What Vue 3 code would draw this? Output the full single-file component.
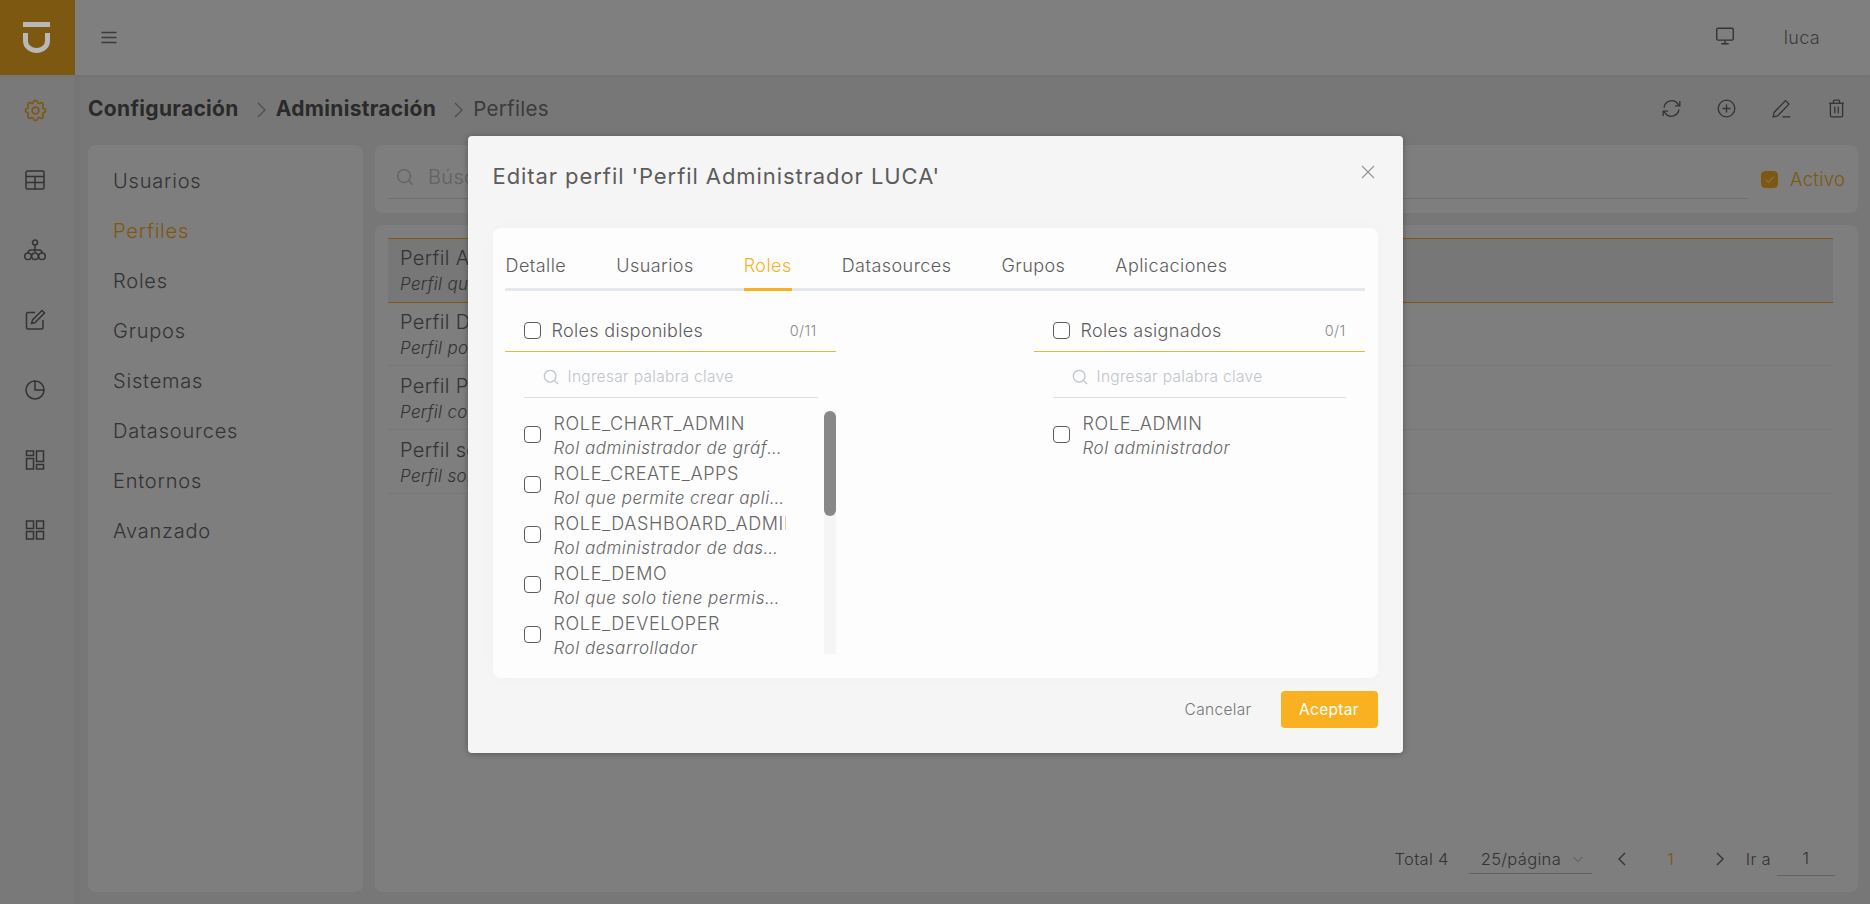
<template>
	<div class="page">
		<header class="topbar">
			<div class="logo">
				<svg width="75" height="75" viewBox="0 0 75 75" fill="none" stroke="#b8b8b8" stroke-width="5">
					<path d="M23 24.500h27M25.500 33v8a11 9.500 0 0 0 22 0v-8" />
				</svg>
			</div>
			<svg class="burger" width="18" height="18" viewBox="0 0 18 18" fill="none" stroke="#777" stroke-width="1.300">
				<path d="M1.500 3.500h15M1.500 8.500h15M1.500 13.500h15" />
			</svg>
			<svg class="monitor icon" viewBox="0 0 24 24"><path v-for="d in icons.monitor" :key="d" :d="d" /></svg>
			<span class="user">luca</span>
		</header>

		<div class="body">
			<aside class="rail">
				<svg v-for="(name, i) in railIcons" :key="name" class="icon" :class="{ active: i === 0 }" viewBox="0 0 24 24">
					<path v-for="d in icons[name]" :key="d" :d="d" />
				</svg>
			</aside>

			<main class="main">
				<div class="crumbs">
					<strong>Configuración</strong>
					<svg class="sep" viewBox="0 0 12 18"><path d="M2 2l7 7-7 7" /></svg>
					<strong>Administración</strong>
					<svg class="sep" viewBox="0 0 12 18"><path d="M2 2l7 7-7 7" /></svg>
					<span>Perfiles</span>
					<div class="tools">
						<svg v-for="name in toolIcons" :key="name" class="icon" viewBox="0 0 24 24">
							<path v-for="d in icons[name]" :key="d" :d="d" />
						</svg>
					</div>
				</div>

				<div class="content">
					<nav class="card menu">
						<a v-for="item in menu" :key="item" :class="{ current: item === 'Perfiles' }">{{ item }}</a>
					</nav>

					<div class="right">
						<div class="card filter">
							<div class="filter-input">
								<svg class="icon search" viewBox="0 0 24 24"><path v-for="d in icons.search" :key="d" :d="d" /></svg>
								<span>Búsqueda</span>
							</div>
							<span class="check on">
								<svg width="13" height="13" viewBox="0 0 13 13" fill="none" stroke="#fff" stroke-width="1"><path d="M2.500 6.500l3 3 5-6" /></svg>
							</span>
							<span class="active-label">Activo</span>
						</div>

						<div class="card results">
							<div v-for="(p, i) in profiles" :key="p.name" class="row" :class="{ selected: i === 0 }">
								<div class="row-name">{{ p.name }}</div>
								<div class="row-desc">{{ p.desc }}</div>
							</div>
							<div class="pager">
								<span>Total 4</span>
								<span class="size">25/página
									<svg width="12" height="12" viewBox="0 0 12 12" fill="none" stroke="#aaa"><path d="M1.500 4l4.500 4.500L10.500 4" /></svg>
								</span>
								<svg class="pg" viewBox="0 0 12 18"><path d="M9 3L3 9l6 6" /></svg>
								<span class="num">1</span>
								<svg class="pg" viewBox="0 0 12 18"><path d="M3 3l6 6-6 6" /></svg>
								<span class="goto">Ir a</span>
								<span class="jump">1</span>
							</div>
						</div>
					</div>
				</div>
			</main>
		</div>

		<div class="overlay">
			<section class="dialog">
				<div class="dialog-head">
					<h2>Editar perfil 'Perfil Administrador LUCA'</h2>
					<svg class="close" width="14" height="14" viewBox="0 0 14 14" fill="none" stroke="#909399" stroke-width="1.100"><path d="M1 1l12 12M13 1L1 13" /></svg>
				</div>

				<div class="dialog-card">
					<div class="tabs">
						<span v-for="t in tabs" :key="t" class="tab" :class="{ on: t === 'Roles' }">{{ t }}</span>
					</div>

					<div class="transfer">
						<div v-for="panel in panels" :key="panel.title" class="panel">
							<div class="panel-head">
								<input type="checkbox" class="check" />
								<span class="panel-title">{{ panel.title }}</span>
								<span class="count">{{ panel.count }}</span>
							</div>
							<div class="panel-search">
								<svg class="icon" viewBox="0 0 24 24"><path v-for="d in icons.search" :key="d" :d="d" /></svg>
								<span>Ingresar palabra clave</span>
							</div>
							<div class="panel-body">
								<ul :class="{ narrow: panel.scroll }">
									<li v-for="r in panel.roles" :key="r.name">
										<input type="checkbox" class="check" />
										<div class="role">
											<div class="role-name">{{ r.name }}</div>
											<div class="role-desc">{{ r.desc }}</div>
										</div>
									</li>
								</ul>
								<div v-if="panel.scroll" class="track"><div class="thumb"></div></div>
							</div>
						</div>
					</div>
				</div>

				<div class="dialog-foot">
					<button class="cancel">Cancelar</button>
					<button class="accept">Aceptar</button>
				</div>
			</section>
		</div>
	</div>
</template>

<script setup>
	const search = ["M11 4a7 7 0 1 0 0 14a7 7 0 1 0 0-14z", "M16 16l4.500 4.500"];

	const icons = {
		search,
		monitor: ["M4.500 3.500h15a1.500 1.500 0 0 1 1.500 1.500v10a1.500 1.500 0 0 1-1.500 1.500h-15a1.500 1.500 0 0 1-1.500-1.500v-10a1.500 1.500 0 0 1 1.500-1.500z", "M12 16.500v3.500M8 20.500h8"],
		gear: ["M10.325 4.317c.426-1.756 2.924-1.756 3.35 0a1.724 1.724 0 0 0 2.573 1.066c1.543-.94 3.31.826 2.37 2.37a1.724 1.724 0 0 0 1.065 2.572c1.756.426 1.756 2.924 0 3.35a1.724 1.724 0 0 0-1.066 2.573c.94 1.543-.826 3.31-2.37 2.37a1.724 1.724 0 0 0-2.572 1.065c-.426 1.756-2.924 1.756-3.35 0a1.724 1.724 0 0 0-2.573-1.066c-1.543.94-3.31-.826-2.37-2.37a1.724 1.724 0 0 0-1.065-2.572c-1.756-.426-1.756-2.924 0-3.35a1.724 1.724 0 0 0 1.066-2.573c-.94-1.543.826-3.31 2.37-2.37 1 .608 2.296.07 2.572-1.065z", "M12 9a3 3 0 1 0 0 6a3 3 0 1 0 0-6z"],
		table: ["M4.500 3h15a1.500 1.500 0 0 1 1.500 1.500v15a1.500 1.500 0 0 1-1.500 1.500h-15a1.500 1.500 0 0 1-1.500-1.500v-15a1.500 1.500 0 0 1 1.500-1.500z", "M3 8.500h18M3 14.500h18M12 8.500v12.500"],
		org: ["M12 2a2.500 2.500 0 1 0 0 5a2.500 2.500 0 1 0 0-5z", "M12 7v7", "M5 15a3.300 3.300 0 1 0 0 6.600a3.300 3.300 0 1 0 0-6.600z", "M12 15a3.300 3.300 0 1 0 0 6.600a3.300 3.300 0 1 0 0-6.600z", "M19 15a3.300 3.300 0 1 0 0 6.600a3.300 3.300 0 1 0 0-6.600z", "M5 15c0-2 1-3 3-3h8c2 0 3 1 3 3"],
		edit: ["M12 4.500h-7a1.500 1.500 0 0 0-1.500 1.500v13.500a1.500 1.500 0 0 0 1.500 1.500h13.500a1.500 1.500 0 0 0 1.500-1.500v-7.500", "M19 2.500l2.500 2.500-9.500 9.500-3.500 1 1-3.500z"],
		pie: ["M12 3a9 9 0 1 0 9 9", "M12 3a9 9 0 0 1 9 9h-9z"],
		panels: ["M3.500 3h7v4.500h-7z", "M3.500 10.500h7v10.500h-7z", "M13.500 3h7v10.500h-7z", "M13.500 16.500h7v4.500h-7z"],
		grid: ["M3.500 3h7v7.500h-7z", "M13.500 3h7v7.500h-7z", "M3.500 13.500h7v7.500h-7z", "M13.500 13.500h7v7.500h-7z"],
		refresh: ["M3.500 11a8.700 8.700 0 0 1 15.500-4.500l2 2.500", "M21.500 3.500v5.500h-5.500", "M20.500 13a8.700 8.700 0 0 1-15.500 4.500l-2-2.500", "M2.500 20.500v-5.500h5.500"],
		plus: ["M12 2.500a9.500 9.500 0 1 0 0 19a9.500 9.500 0 1 0 0-19z", "M12 7.500v9M7.500 12h9"],
		pen: ["M16.500 3l4 4-13 13.500-5 1 1-5z", "M13 21.500h9"],
		trash: ["M3.500 6h17", "M8.500 6v-2.500a1 1 0 0 1 1-1h5a1 1 0 0 1 1 1v2.500", "M5 6v14a1.500 1.500 0 0 0 1.500 1.500h11a1.500 1.500 0 0 0 1.500-1.500v-14", "M10 10v7.500M14 10v7.500"]
	};

	const railIcons = ["gear", "table", "org", "edit", "pie", "panels", "grid"];
	const toolIcons = ["refresh", "plus", "pen", "trash"];

	const menu = ["Usuarios", "Perfiles", "Roles", "Grupos", "Sistemas", "Datasources", "Entornos", "Avanzado"];

	const profiles = [
		{ name: "Perfil Administrador LUCA", desc: "Perfil que administra LUCA" },
		{ name: "Perfil Demo", desc: "Perfil por defecto" },
		{ name: "Perfil Público", desc: "Perfil con acceso público" },
		{ name: "Perfil solo lectura", desc: "Perfil solo de lectura" }
	];

	const tabs = ["Detalle", "Usuarios", "Roles", "Datasources", "Grupos", "Aplicaciones"];

	const panels = [
		{
			title: "Roles disponibles",
			count: "0/11",
			scroll: true,
			roles: [
				{ name: "ROLE_CHART_ADMIN", desc: "Rol administrador de gráficos" },
				{ name: "ROLE_CREATE_APPS", desc: "Rol que permite crear aplicaciones" },
				{ name: "ROLE_DASHBOARD_ADMIN", desc: "Rol administrador de dashboards" },
				{ name: "ROLE_DEMO", desc: "Rol que solo tiene permisos de demo" },
				{ name: "ROLE_DEVELOPER", desc: "Rol desarrollador" }
			]
		},
		{
			title: "Roles asignados",
			count: "0/1",
			scroll: false,
			roles: [{ name: "ROLE_ADMIN", desc: "Rol administrador" }]
		}
	];
</script>

<style scoped>
	.page
	{
		position: relative;
		width: 1870px;
		height: 904px;
		overflow: hidden;
		display: flex;
		flex-direction: column;
		background: #eeeeee;
		color: #5c5c5c;
		font-family: Inter, "Open Sans", sans-serif;
		letter-spacing: .02em;
	}

	.icon
	{
		width: 24px;
		height: 24px;
		fill: none;
		stroke: #666;
		stroke-width: 1.500;
		flex: none;
	}

	.topbar
	{
		position: relative;
		height: 75px;
		flex: none;
		display: flex;
		align-items: center;
		background: #ffffff;
		box-shadow: 0 1px 4px rgba(0, 0, 0, .06);
	}

	.logo
	{
		width: 75px;
		height: 75px;
		background: #f9b122;
	}

	/* the mark stays light over the dimmed page */
	.logo svg
	{
		display: block;
		position: relative;
		z-index: 3;
	}

	.burger
	{
		margin-left: 25px;
	}

	.monitor
	{
		margin-left: auto;
		margin-top: -4px;
		width: 22px;
		height: 22px;
	}

	.user
	{
		margin: 0 50px 0 48px;
		font-size: 18px;
		font-weight: 300;
		color: #777;
	}

	.body
	{
		flex: 1;
		display: flex;
		min-height: 0;
	}

	.rail
	{
		width: 75px;
		flex: none;
		padding-top: 23px;
		display: flex;
		flex-direction: column;
		align-items: center;
		gap: 46px;
		box-sizing: border-box;
		background: #f2f2f2;
		box-shadow: 2px 0 6px rgba(0, 0, 0, .03);
	}

	.rail .icon
	{
		margin-left: -5px;
	}

	.rail .active
	{
		stroke: #f9b122;
		width: 27px;
		height: 27px;
		margin-top: -1px;
		margin-bottom: -2px;
	}

	.main
	{
		flex: 1;
		min-width: 0;
		padding: 0 12px 12px 13px;
		display: flex;
		flex-direction: column;
	}

	.crumbs
	{
		height: 70px;
		flex: none;
		box-sizing: border-box;
		padding-bottom: 3px;
		display: flex;
		align-items: center;
		font-size: 21px;
		color: #555;
	}

	.crumbs strong
	{
		font-weight: 700;
	}

	.crumbs span
	{
		color: #777;
		font-weight: 400;
		font-size: 20.500px;
	}

	.sep
	{
		width: 12px;
		height: 18px;
		margin: 2px 8px 0 17px;
		flex: none;
		fill: none;
		stroke: #999;
		stroke-width: 1.200;
	}

	.tools
	{
		margin-left: auto;
		margin-right: 11px;
		display: flex;
		gap: 34px;
	}

	.tools .icon
	{
		width: 21px;
		height: 21px;
	}

	.content
	{
		flex: 1;
		min-height: 0;
		display: grid;
		grid-template-columns: 275px 1fr;
		gap: 12px;
	}

	.card
	{
		background: #fdfdfd;
		border-radius: 8px;
	}

	.menu
	{
		padding: 11px 0 0 25px;
		display: flex;
		flex-direction: column;
	}

	.menu a
	{
		height: 50px;
		line-height: 50px;
		font-size: 20px;
		font-weight: 300;
		letter-spacing: .04em;
		color: #666;
	}

	.menu a.current
	{
		color: #f9b122;
	}

	.right
	{
		min-width: 0;
		display: flex;
		flex-direction: column;
		gap: 12px;
	}

	.filter
	{
		height: 68px;
		flex: none;
		box-sizing: border-box;
		padding: 0 13px;
		display: flex;
		align-items: center;
	}

	.filter-input
	{
		width: 1360px;
		height: 54px;
		flex: none;
		align-self: flex-start;
		box-sizing: border-box;
		padding: 10px 0 0 6px;
		display: flex;
		align-items: center;
		gap: 12px;
		border-bottom: 1px solid #dcdfe6;
		color: #c0c4cc;
		font-size: 20px;
		font-weight: 300;
	}

	.filter-input .search
	{
		stroke: #c0c4cc;
		width: 22px;
		height: 22px;
	}

	.check
	{
		appearance: none;
		margin: 0;
		width: 17px;
		height: 17px;
		flex: none;
		box-sizing: border-box;
		border: 1.500px solid #5c5c5c;
		border-radius: 4px;
		background: #fff;
	}

	.check.on
	{
		margin-left: 13px;
		display: flex;
		align-items: center;
		justify-content: center;
		background: #f9b122;
		border-color: #f9b122;
	}

	.active-label
	{
		margin-left: 12px;
		font-size: 18.500px;
		font-weight: 300;
		color: #f9b122;
		white-space: nowrap;
	}

	.results
	{
		flex: 1;
		min-height: 0;
		box-sizing: border-box;
		padding: 13px 25px 16px 13px;
		display: flex;
		flex-direction: column;
	}

	.row
	{
		height: 64px;
		flex: none;
		box-sizing: border-box;
		padding: 6px 12px 0;
		border-bottom: 1px solid #ebeef5;
	}

	.row.selected
	{
		height: 65px;
		margin-bottom: -1px;
		background: #eeeeee;
		border-top: 1px solid #f9b122;
		border-bottom: 1px solid #f9b122;
		padding-top: 5px;
	}

	.row-name
	{
		font-size: 20px;
		font-weight: 300;
		line-height: 28px;
		color: #666;
	}

	.row-desc
	{
		font-size: 17px;
		font-style: italic;
		font-weight: 300;
		line-height: 24px;
		color: #666;
	}

	.pager
	{
		margin: auto -2px 0 0;
		display: flex;
		align-items: center;
		justify-content: flex-end;
		height: 34px;
		font-size: 16.500px;
		font-weight: 300;
		color: #666;
	}

	.size
	{
		width: 123px;
		height: 30px;
		margin-left: 20px;
		box-sizing: border-box;
		padding: 0 8px 0 12px;
		display: flex;
		align-items: center;
		justify-content: space-between;
		border-bottom: 1px solid #c0c4cc;
	}

	.pg
	{
		width: 12px;
		height: 18px;
		flex: none;
		fill: none;
		stroke: #666;
		stroke-width: 1.400;
	}

	.size + .pg
	{
		margin-left: 24px;
	}

	.num
	{
		width: 86px;
		text-align: center;
		color: #f9b122;
	}

	.goto
	{
		margin-left: 20px;
	}

	.jump
	{
		width: 58px;
		height: 34px;
		line-height: 32px;
		margin-left: 6px;
		box-sizing: border-box;
		text-align: center;
		border-bottom: 1px solid #c0c4cc;
	}

	.overlay
	{
		position: absolute;
		inset: 0;
		z-index: 2;
		padding-top: 136px;
		box-sizing: border-box;
		background: rgba(0, 0, 0, .5);
	}

	.dialog
	{
		width: 935px;
		height: 617px;
		margin: 0 auto;
		padding: 0 25px;
		box-sizing: border-box;
		background: #f5f5f5;
		border-radius: 4px;
		box-shadow: 0 1px 6px rgba(0, 0, 0, .3);
		display: flex;
		flex-direction: column;
	}

	.dialog-head
	{
		height: 92px;
		flex: none;
		padding-right: 3px;
		display: flex;
		align-items: flex-start;
		justify-content: space-between;
	}

	.dialog-head h2
	{
		margin: 24px 0 0;
		font-size: 22px;
		line-height: 32px;
		font-weight: 400;
		color: #5c5c5c;
		letter-spacing: .042em;
	}

	.close
	{
		margin-top: 29px;
	}

	.dialog-card
	{
		height: 450px;
		flex: none;
		box-sizing: border-box;
		padding: 0 13px 0 12px;
		background: #fdfdfd;
		border-radius: 8px;
		box-shadow: 0 0 16px rgba(0, 0, 0, .02);
	}

	.tabs
	{
		height: 63px;
		box-sizing: border-box;
		padding-left: 1px;
		display: flex;
		gap: 50px;
		border-bottom: 3px solid #e4e7ed;
	}

	.tab
	{
		height: 63px;
		box-sizing: border-box;
		padding-top: 26px;
		line-height: 24px;
		font-size: 18px;
		font-weight: 300;
		letter-spacing: .025em;
		color: #5c5c5c;
	}

	.tab.on
	{
		color: #f9b122;
		border-bottom: 3px solid #f9b122;
	}

	.transfer
	{
		display: flex;
		justify-content: space-between;
	}

	.panel
	{
		width: 331px;
	}

	.panel-head
	{
		height: 61px;
		box-sizing: border-box;
		padding: 19px 19px 1px;
		display: flex;
		align-items: center;
		border-bottom: 1px solid #f0b43c;
	}

	.panel-title
	{
		margin-left: 11px;
		font-size: 18px;
		font-weight: 300;
		color: #5c5c5c;
	}

	.count
	{
		margin-left: auto;
		font-size: 14.500px;
		font-weight: 300;
		color: #888;
	}

	.panel-search
	{
		height: 46px;
		margin: 0 18px 0 19px;
		box-sizing: border-box;
		padding: 4px 0 0 17px;
		display: flex;
		align-items: center;
		gap: 7px;
		border-bottom: 1px solid #dcdfe6;
		color: #c0c4cc;
		font-size: 15.500px;
		font-weight: 300;
		white-space: nowrap;
	}

	.panel:last-child .panel-search
	{
		margin-right: 19px;
	}

	.panel-search .icon
	{
		width: 20px;
		height: 20px;
		stroke: #c0c4cc;
	}

	.panel-body
	{
		height: 243px;
		margin-top: 13px;
		display: flex;
		justify-content: space-between;
		overflow: hidden;
	}

	ul
	{
		margin: 0;
		padding: 1px 0 0 19px;
		list-style: none;
		flex: 1;
		min-width: 0;
	}

	li
	{
		height: 50px;
		display: flex;
		align-items: center;
		gap: 13px;
	}

	li .check
	{
		margin-top: -6px;
	}

	ul.narrow .role
	{
		width: 232px;
	}

	.role
	{
		height: 48px;
		margin-top: -2px;
		overflow: hidden;
		white-space: nowrap;
	}

	.role-name
	{
		font-size: 18px;
		line-height: 24px;
		font-weight: 300;
		letter-spacing: .035em;
		color: #666;
	}

	.role-desc
	{
		font-size: 17px;
		line-height: 24px;
		font-style: italic;
		font-weight: 300;
		letter-spacing: .03em;
		color: #666;
		overflow: hidden;
		text-overflow: ellipsis;
	}

	.track
	{
		width: 12px;
		height: 243px;
		flex: none;
		background: #f5f5f5;
	}

	.thumb
	{
		height: 105px;
		border-radius: 6px;
		background: #888;
	}

	.dialog-foot
	{
		height: 75px;
		flex: none;
		padding-top: 13px;
		box-sizing: border-box;
		display: flex;
		align-items: flex-start;
		justify-content: flex-end;
		gap: 14px;
	}

	button
	{
		height: 37px;
		border: 0;
		border-radius: 4px;
		padding: 0;
		font-family: inherit;
		font-size: 15.500px;
		letter-spacing: .02em;
	}

	.cancel
	{
		width: 97px;
		background: none;
		color: #777;
		font-weight: 300;
	}

	.accept
	{
		width: 97px;
		background: #f9b122;
		color: #fff;
		font-weight: 400;
	}
</style>

<style>
	html, body
	{
		margin: 0;
		overflow: hidden;
	}
</style>
